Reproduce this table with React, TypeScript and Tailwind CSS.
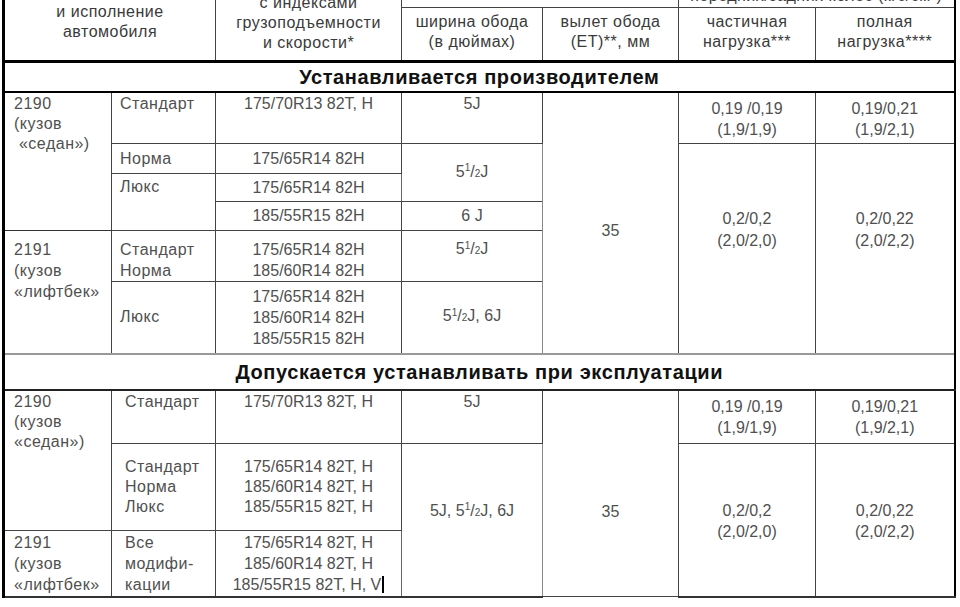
import React from "react";

// 5 ½ J style fraction as it is typeset in the manual
function Half() {
  return (
    <>
      5<sup className="text-[10px] top-[-0.55em]">1</sup>/<span className="text-[10px]">2</span>
    </>
  );
}

const cell = "border border-[#444] p-0";
const first = "border-l-[3px]! border-l-black!";
const last = "border-r-2! border-r-black!";
const grey = "border-l-[#888]!";
const mid = "border-l-[#666]!";
const headBottom = "border-b-[3px]! border-b-black!";
const word = "tracking-[0.5px]";

export default function App() {
  return (
    <div className="h-[607px] w-[960px] overflow-hidden bg-white font-['Liberation_Sans',Arial,sans-serif] text-[16px] leading-[20px] text-[#505050]">
      <table className="-mt-[37px] ml-[2px] w-[951px] table-fixed border-collapse">
        <colgroup>
          <col className="w-[108px]" />
          <col className="w-[104px]" />
          <col className="w-[186px]" />
          <col className="w-[141px]" />
          <col className="w-[136px]" />
          <col className="w-[137px]" />
          <col className="w-[139px]" />
        </colgroup>
        <thead className={`text-[#3a3a3a] ${word}`}>
          <tr className="h-[44px]">
            <th rowSpan={2} colSpan={2} className={`${cell} ${first} ${headBottom} font-normal text-center align-middle`}>
              Модель
              <br />и исполнение
              <br />
              автомобиля
            </th>
            <th rowSpan={2} className={`${cell} ${headBottom} font-normal text-center align-middle pt-[2px]`}>
              Шины
              <br />с индексами
              <br />
              грузоподъемности
              <br />и скорости*
            </th>
            <th colSpan={2} className={`${cell} ${mid} font-normal text-center align-middle`}>
              Диски колес
            </th>
            <th colSpan={2} className={`${cell} ${last} font-normal text-center align-middle`}>
              Давление воздуха в шинах
              <br />
              передних/задних колес (кгс/см²)
            </th>
          </tr>
          <tr className="h-[54px]">
            <th className={`${cell} ${mid} ${headBottom} font-normal text-center align-middle pb-[4px]`}>
              ширина обода
              <br />
              (в дюймах)
            </th>
            <th className={`${cell} ${grey} ${headBottom} font-normal text-center align-middle pb-[4px]`}>
              вылет обода
              <br />
              (ET)**, мм
            </th>
            <th className={`${cell} ${headBottom} border-l-[#222]! font-normal text-center align-middle pb-[4px]`}>
              частичная
              <br />
              нагрузка***
            </th>
            <th className={`${cell} ${grey} ${last} ${headBottom} font-normal text-center align-middle pb-[4px]`}>
              полная
              <br />
              нагрузка****
            </th>
          </tr>
        </thead>
        <tbody>
          {/* Устанавливается производителем */}
          <tr className="h-[30px]">
            <td colSpan={7} className={`${cell} ${first} ${last} border-b-2! border-b-black! text-center align-middle text-[20px] tracking-[0.6px] font-bold text-[#111]`}>
              Устанавливается производителем
            </td>
          </tr>
          <tr className="h-[52px]">
            <td rowSpan={4} className={`${cell} ${first} ${word} border-b-[#333]! align-top pl-[9px] pt-[1px]`}>
              2190
              <br />
              (кузов
              <br />
              &nbsp;«седан»)
            </td>
            <td className={`${cell} ${word} border-l-[#222]! align-top pl-[8px] pt-[1px]`}>Стандарт</td>
            <td className={`${cell} align-top text-center pt-[1px]`}>175/70R13 82T, H</td>
            <td className={`${cell} ${mid} align-top text-center pt-[1px]`}>5J</td>
            <td rowSpan={6} className={`${cell} ${grey} text-center align-middle pt-[16px]`}>35</td>
            <td className={`${cell} border-l-[#222]! text-center align-middle pt-[3px] leading-[21px]`}>
              0,19 /0,19
              <br />
              (1,9/1,9)
            </td>
            <td className={`${cell} ${grey} ${last} text-center align-middle pt-[3px] leading-[21px]`}>
              0,19/0,21
              <br />
              (1,9/2,1)
            </td>
          </tr>
          <tr className="h-[30px]">
            <td className={`${cell} ${word} align-middle pl-[8px]`}>Норма</td>
            <td className={`${cell} text-center align-middle`}>175/65R14 82H</td>
            <td rowSpan={2} className={`${cell} ${mid} text-center align-middle`}>
              <Half />J
            </td>
            <td rowSpan={5} className={`${cell} border-l-[#222]! text-center align-middle pb-[36px] leading-[22px]`}>
              0,2/0,2
              <br />
              (2,0/2,0)
            </td>
            <td rowSpan={5} className={`${cell} ${grey} ${last} text-center align-middle pb-[36px] leading-[22px]`}>
              0,2/0,22
              <br />
              (2,0/2,2)
            </td>
          </tr>
          <tr className="h-[28px]">
            <td rowSpan={2} className={`${cell} ${word} align-top pl-[8px] pt-[3px]`}>Люкс</td>
            <td className={`${cell} text-center align-middle`}>175/65R14 82H</td>
          </tr>
          <tr className="h-[29px]">
            <td className={`${cell} text-center align-middle`}>185/55R15 82H</td>
            <td className={`${cell} ${mid} text-center align-middle`}>6 J</td>
          </tr>
          <tr className="h-[51px]">
            <td rowSpan={2} className={`${cell} ${first} ${word} align-top pl-[9px] pt-[8px] leading-[21px]`}>
              2191
              <br />
              (кузов
              <br />
              «лифтбек»
            </td>
            <td className={`${cell} ${word} align-top pl-[8px] pt-[8px] leading-[21px]`}>
              Стандарт
              <br />
              Норма
            </td>
            <td className={`${cell} align-top text-center pt-[8px] leading-[21px]`}>
              175/65R14 82H
              <br />
              185/60R14 82H
            </td>
            <td className={`${cell} ${mid} align-top text-center pt-[8px]`}>
              <Half />J
            </td>
          </tr>
          <tr className="h-[72px]">
            <td className={`${cell} ${word} align-middle pl-[8px]`}>Люкс</td>
            <td className={`${cell} text-center align-middle leading-[21px]`}>
              175/65R14 82H
              <br />
              185/60R14 82H
              <br />
              185/55R15 82H
            </td>
            <td className={`${cell} ${mid} text-center align-middle`}>
              <Half />J, 6J
            </td>
          </tr>

          {/* Допускается устанавливать при эксплуатации */}
          <tr className="h-[36px]">
            <td colSpan={7} className={`${cell} ${first} ${last} border-t-2! border-t-[#999]! border-b-2! border-b-[#222]! text-center align-middle text-[20px] tracking-[0.6px] font-bold text-[#111]`}>
              Допускается устанавливать при эксплуатации
            </td>
          </tr>
          <tr className="h-[54px]">
            <td rowSpan={2} className={`${cell} ${first} ${word} align-top pl-[9px] pt-[1px]`}>
              2190
              <br />
              (кузов
              <br />
              «седан»)
            </td>
            <td className={`${cell} ${word} align-top pl-[13px] pt-[1px]`}>Стандарт</td>
            <td className={`${cell} align-top text-center pt-[1px]`}>175/70R13 82T, H</td>
            <td className={`${cell} ${mid} align-top text-center pt-[1px]`}>5J</td>
            <td rowSpan={3} className={`${cell} ${grey} text-center align-middle pt-[38px]`}>35</td>
            <td className={`${cell} border-l-[#222]! text-center align-middle leading-[21px]`}>
              0,19 /0,19
              <br />
              (1,9/1,9)
            </td>
            <td className={`${cell} ${grey} ${last} text-center align-middle leading-[21px]`}>
              0,19/0,21
              <br />
              (1,9/2,1)
            </td>
          </tr>
          <tr className="h-[87px]">
            <td className={`${cell} ${word} align-middle pl-[13px]`}>
              Стандарт
              <br />
              Норма
              <br />
              Люкс
            </td>
            <td className={`${cell} text-center align-middle`}>
              175/65R14 82T, H
              <br />
              185/60R14 82T, H
              <br />
              185/55R15 82T, H
            </td>
            <td rowSpan={2} className={`${cell} ${mid} border-b-2! border-b-[#333]! text-center align-middle pb-[16px]`}>
              5J, <Half />J, 6J
            </td>
            <td rowSpan={2} className={`${cell} border-l-[#222]! border-b-2! border-b-[#333]! text-center align-middle pt-[2px] leading-[21px]`}>
              0,2/0,2
              <br />
              (2,0/2,0)
            </td>
            <td rowSpan={2} className={`${cell} ${grey} ${last} border-b-2! border-b-[#333]! text-center align-middle pt-[2px] leading-[21px]`}>
              0,2/0,22
              <br />
              (2,0/2,2)
            </td>
          </tr>
          <tr className="h-[66px]">
            <td className={`${cell} ${first} ${word} border-b-2! border-b-[#333]! align-top pl-[9px] pt-[1px] leading-[21px]`}>
              2191
              <br />
              (кузов
              <br />
              «лифтбек»
            </td>
            <td className={`${cell} ${word} border-b-2! border-b-[#333]! align-top pl-[13px] pt-[1px] leading-[21px]`}>
              Все
              <br />
              модифи-
              <br />
              кации
            </td>
            <td className={`${cell} border-b-2! border-b-[#333]! align-top text-center pt-[1px] leading-[21px]`}>
              175/65R14 82T, H
              <br />
              185/60R14 82T, H
              <br />
              185/55R15 82T, H, V
              <span className="ml-px inline-block h-[17px] w-[2px] bg-black align-[-3px]" />
            </td>
          </tr>
        </tbody>
      </table>
    </div>
  );
}
